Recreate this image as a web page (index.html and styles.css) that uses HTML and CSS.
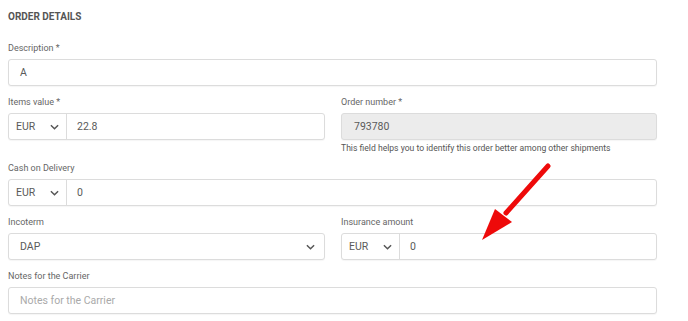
FILE: index.html
```html
<!DOCTYPE html>
<html>
<head>
<meta charset="utf-8">
<link rel="stylesheet" href="styles.css">
</head>
<body>
<div class="page">
  <h2 class="title">ORDER DETAILS</h2>
  <div class="field full">
    <label class="label">Description *</label>
    <div class="input"><span class="val">A</span></div>
  </div>
  <div class="row">
    <div class="field">
      <label class="label">Items value *</label>
      <div class="input combo">
        <div class="cur"><span>EUR</span><svg class="chev" viewBox="0 0 10 6"><path d="M1 1l4 4 4-4"/></svg></div>
        <span class="val">22.8</span>
      </div>
    </div>
    <div class="field">
      <label class="label">Order number *</label>
      <div class="input disabled"><span class="val">793780</span></div>
      <div class="help">This field helps you to identify this order better among other shipments</div>
    </div>
  </div>
  <div class="field full">
    <label class="label">Cash on Delivery</label>
    <div class="input combo">
      <div class="cur"><span>EUR</span><svg class="chev" viewBox="0 0 10 6"><path d="M1 1l4 4 4-4"/></svg></div>
      <span class="val">0</span>
    </div>
  </div>
  <div class="row">
    <div class="field">
      <label class="label">Incoterm</label>
      <div class="input select"><span class="val">DAP</span><svg class="chev" viewBox="0 0 10 6"><path d="M1 1l4 4 4-4"/></svg></div>
    </div>
    <div class="field">
      <label class="label">Insurance amount</label>
      <div class="input combo">
        <div class="cur"><span>EUR</span><svg class="chev" viewBox="0 0 10 6"><path d="M1 1l4 4 4-4"/></svg></div>
        <span class="val">0</span>
      </div>
    </div>
  </div>
  <div class="field full">
    <label class="label">Notes for the Carrier</label>
    <div class="input"><span class="val ph">Notes for the Carrier</span></div>
  </div>
  <svg class="arrow" viewBox="0 0 100 100" width="100" height="100">
    <line x1="82" y1="15" x2="40" y2="62" stroke="#ee0a0a" stroke-width="5" stroke-linecap="round"/>
    <polygon points="16,89 29,58 46,71" fill="#ee0a0a"/>
  </svg>
</div>
</body>
</html>
```
FILE: styles.css
```css
* { box-sizing: border-box; }
body {
  margin: 0;
  background: #fff;
  font-family: Roboto, "Liberation Sans", sans-serif;
  color: #555;
}
.page {
  position: relative;
  width: 665px;
  padding: 10px 8px 0 8px;
}
.title {
  margin: 0 0 18px 0;
  font-size: 10px;
  line-height: 14px;
  font-weight: 700;
  color: #555;
}
.row {
  display: grid;
  grid-template-columns: 317px 316px;
  column-gap: 16px;
}
.field {
  display: flex;
  flex-direction: column;
  margin-bottom: 10px;
}
.label {
  font-size: 9px;
  line-height: 12px;
  color: #666;
  margin-bottom: 5px;
}
.input {
  height: 27px;
  border: 1px solid #dcdcdc;
  border-radius: 3px;
  display: flex;
  align-items: center;
  font-size: 10.5px;
  color: #5a5a5a;
  background: #fff;
  box-shadow: 0 1px 1px rgba(0,0,0,0.04);
}
.val { padding-left: 11px; }
.ph { color: #aaa; }
.disabled { background: #ececec; }
.disabled .val { padding-left: 12px; }
.combo .cur {
  width: 58px;
  height: 100%;
  border-right: 1px solid #dcdcdc;
  display: flex;
  align-items: center;
  justify-content: space-between;
  padding: 0 7px 0 7px;
}
.combo .val { padding-left: 10px; }
.chev {
  width: 9px;
  height: 6px;
  fill: none;
  stroke: #555;
  stroke-width: 1.6;
}
.select { justify-content: space-between; padding-right: 9px; }
.help {
  font-size: 8.6px;
  line-height: 12px;
  color: #555;
  margin-top: 2px;
  margin-bottom: -2px;
}
.arrow {
  position: absolute;
  left: 466px;
  top: 151px;
}
```
